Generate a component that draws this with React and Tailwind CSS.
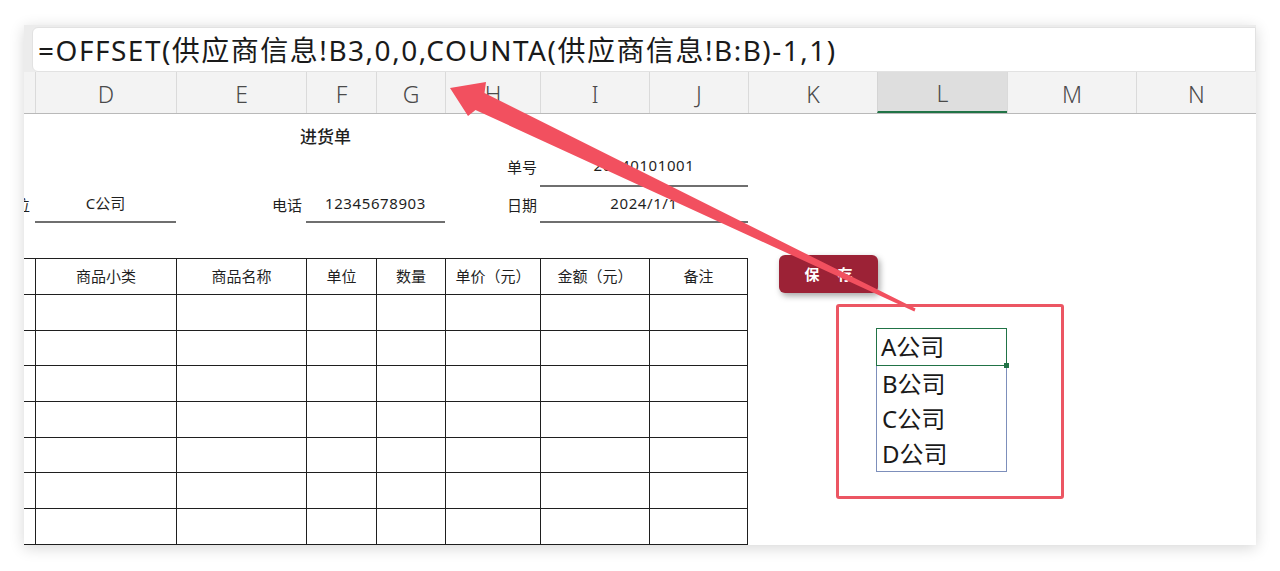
import React from 'react';

const GRID = 'grid grid-cols-[11px_141px_130px_70px_69px_95px_109px_99px_129px_130px_129px_120px]';
const LETTERS = ['', 'D', 'E', 'F', 'G', 'H', 'I', 'J', 'K', 'L', 'M', 'N'];
const HEADS = ['商品小类', '商品名称', '单位', '数量', '单价（元）', '金额（元）', '备注'];

function TableRow({ labels, header }) {
  return (
    <div className={`${GRID} ${header ? 'h-[36px]' : 'h-[35.7px]'}`}>
      <div className="border-b border-[#1f1f1f]" />
      {HEADS.map((h, i) => (
        <div
          key={h}
          className={
            i === HEADS.length - 1
              ? 'border-b border-l border-r border-[#1f1f1f] flex items-center justify-center'
              : 'border-b border-l border-[#1f1f1f] flex items-center justify-center'
          }
        >
          {labels ? h : ''}
        </div>
      ))}
      <div />
      <div />
      <div />
      <div />
    </div>
  );
}

// red pointer drawn over the sheet
function Arrow() {
  return (
    <svg className="absolute left-0 top-0 pointer-events-none" width="1280" height="571" viewBox="0 0 1280 571">
      <polygon
        points="450,88 486,82 484.5,93 915.6,308.6 914.4,311.4 475.5,110 468,116"
        fill="#f2505f"
      />
    </svg>
  );
}

export default function App() {
  return (
    <div className="relative w-[1280px] h-[571px] bg-white overflow-hidden font-['Noto_Sans','Noto_Sans_CJK_SC',sans-serif] text-[#1f1f1f]">
      <div className="pl-[24px] pt-[25px] w-[1256px]">
        <div className="w-[1232px] h-[520px] overflow-hidden bg-white shadow-[0_3px_14px_rgba(0,0,0,0.16)]">
          {/* formula bar */}
          <div className="h-[47px] bg-[#ececec] pl-[8px] pt-[2px]">
            <div className="h-[45px] bg-white rounded-l-[6px] border border-[#e2e2e2] flex items-center pl-[5px] text-[28px] tracking-[1.5px] leading-none text-[#1a1a1a] whitespace-nowrap">
              =OFFSET(供应商信息!B3,0,0,COUNTA(供应商信息!B:B)-1,1)
            </div>
          </div>

          {/* column header */}
          <div className={`${GRID} h-[42px] bg-[#f3f3f3] border-b border-[#b9b9b9]`}>
            {LETTERS.map((l, i) => (
              <div
                key={i}
                className={
                  l === 'L'
                    ? 'flex items-center justify-center pt-[4px] bg-[#dedede] border-l border-[#d4d4d4] border-b-2 border-b-[#217346] text-[23px] font-light text-[#4a4a4a]'
                    : i === 0
                    ? 'bg-[#f3f3f3]'
                    : 'flex items-center justify-center pt-[4px] border-l border-[#dadada] text-[23px] font-light text-[#4a4a4a]'
                }
              >
                {l}
              </div>
            ))}
          </div>

          {/* row 1: title */}
          <div className={`${GRID} h-[37px]`}>
            <div className="col-span-2" />
            <div className="col-span-3 pl-[30px] pt-[8px] flex items-center justify-center text-[17px] font-medium">进货单</div>
          </div>

          {/* row 2 */}
          <div className={`${GRID} h-[36px] text-[15px]`}>
            <div className="col-span-5" />
            <div className="flex items-end justify-end pr-[3px] pb-[9px]">单号</div>
            <div className="col-span-2 flex items-end justify-center pb-[9px] tracking-[0.6px] border-b-2 border-[#6f6f6f]">20240101001</div>
          </div>

          {/* row 3 */}
          <div className={`${GRID} h-[36px] text-[15px]`}>
            <div className="flex items-end justify-end pb-[7px] whitespace-nowrap">
              <span className="mr-[5px]">单位</span>
            </div>
            <div className="flex items-end justify-center pb-[7px] border-b-2 border-[#6f6f6f]">C公司</div>
            <div className="flex items-end justify-end pr-[4px] pb-[7px]">电话</div>
            <div className="col-span-2 flex items-end justify-center pb-[7px] tracking-[0.6px] border-b-2 border-[#6f6f6f]">12345678903</div>
            <div className="flex items-end justify-end pr-[3px] pb-[7px]">日期</div>
            <div className="col-span-2 flex items-end justify-center pb-[7px] tracking-[0.6px] border-b-2 border-[#6f6f6f]">2024/1/1</div>
          </div>

          {/* row 4 */}
          <div className={`${GRID} h-[36px]`}>
            <div className="col-span-8 border-b border-[#1f1f1f]" />
          </div>

          {/* table */}
          <div className="text-[15px]">
            <TableRow labels header />
            {[0, 1, 2, 3, 4, 5, 6].map((r) => (
              <TableRow key={r} />
            ))}
          </div>
        </div>
      </div>

      {/* save button */}
      <div className="absolute left-[779px] top-[255px] w-[99px] h-[38px] rounded-[6px] bg-[#9c2236] shadow-[2px_3px_6px_rgba(0,0,0,0.35)] flex items-center justify-center gap-[18px] text-white text-[15px] font-bold">
        <span>保</span>
        <span>存</span>
      </div>

      <Arrow />

      {/* highlight box */}
      <div className="absolute left-[836px] top-[304px] w-[228px] h-[195px] border-[3px] border-[#ec5663] rounded-[3px]" />

      {/* dropdown */}
      <div className="absolute left-[876px] top-[328px] w-[131px] text-[24px] leading-none text-[#1a1a1a]">
        <div className="relative h-[38px] border-[1.5px] border-[#217346] flex items-center pl-[4px] bg-white">
          A公司
          <div className="absolute -right-[3px] -bottom-[3px] w-[5px] h-[5px] bg-[#217346]" />
        </div>
        <div className="border border-t-0 border-[#7d8fbb] bg-white">
          <div className="h-[35px] flex items-center pl-[5px]">B公司</div>
          <div className="h-[35px] flex items-center pl-[5px]">C公司</div>
          <div className="h-[35px] flex items-center pl-[5px]">D公司</div>
        </div>
      </div>
    </div>
  );
}
